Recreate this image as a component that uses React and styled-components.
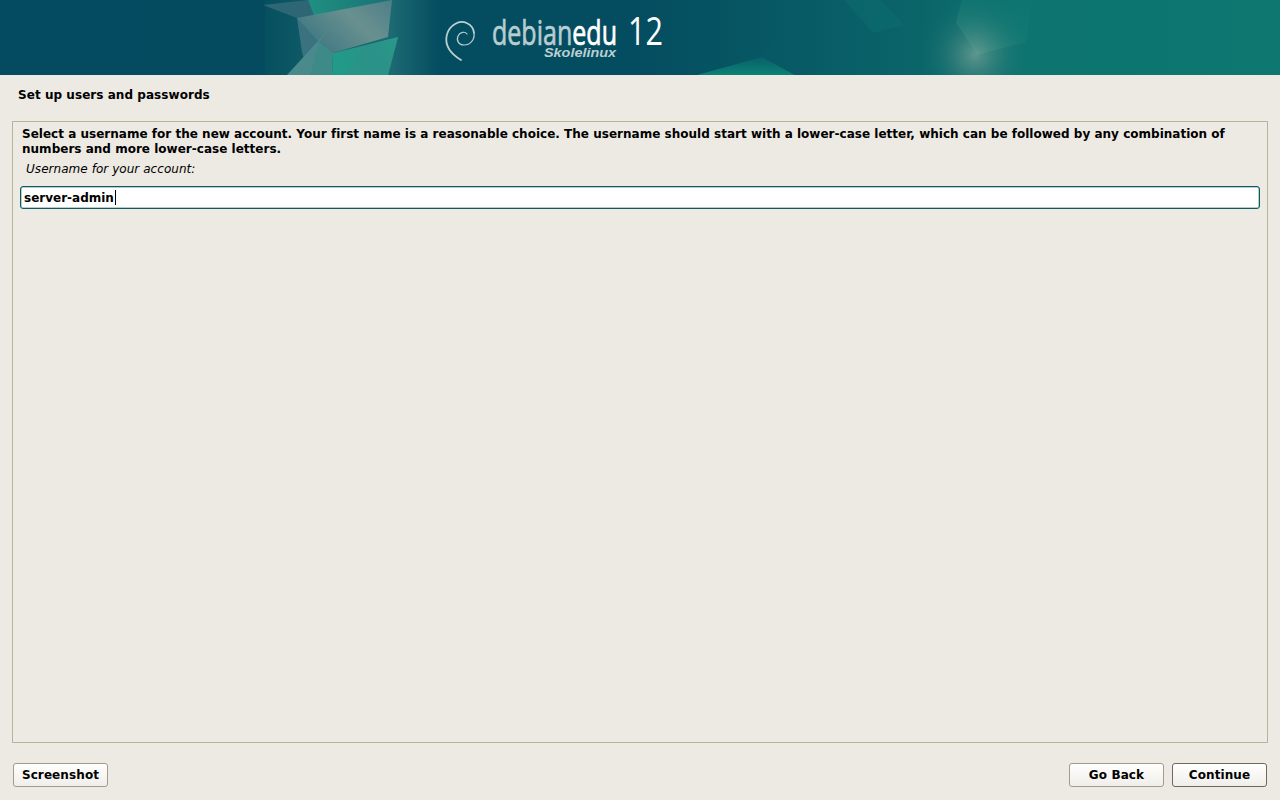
import styled, { createGlobalStyle } from 'styled-components';

const GlobalStyle = createGlobalStyle`
  html, body {
    margin: 0;
    height: 100%;
    background: #edeae3;
    overflow: hidden;
  }
  #root {
    height: 100%;
  }
  * {
    box-sizing: border-box;
  }
`;

function Banner() {
  return (
    <BannerSvg viewBox="0 0 1280 75" width="1280" height="75">
      <defs>
        <linearGradient id="base" x1="0" x2="1" y1="0" y2="0">
          <stop offset="0" stopColor="#044a60" />
          <stop offset="0.5" stopColor="#044d60" />
          <stop offset="0.72" stopColor="#0a6569" />
          <stop offset="0.8" stopColor="#0d7470" />
          <stop offset="1" stopColor="#0e7770" />
        </linearGradient>
        <linearGradient id="leftGlow" x1="0" x2="1" y1="0" y2="0">
          <stop offset="0" stopColor="#07505f" />
          <stop offset="0.4" stopColor="#12616c" />
          <stop offset="0.72" stopColor="#1c6a72" />
          <stop offset="1" stopColor="#044c60" />
        </linearGradient>
        <radialGradient id="glow" cx="975" cy="55" r="58" gradientUnits="userSpaceOnUse">
          <stop offset="0" stopColor="#7fa79b" stopOpacity="0.7" />
          <stop offset="0.5" stopColor="#5a9089" stopOpacity="0.25" />
          <stop offset="1" stopColor="#0d6d6c" stopOpacity="0" />
        </radialGradient>
        <linearGradient id="bottomTeal" x1="0" x2="0" y1="0" y2="1">
          <stop offset="0" stopColor="#0a5f68" />
          <stop offset="1" stopColor="#0b8275" />
        </linearGradient>
        <linearGradient id="topTeal" x1="0" x2="1" y1="0" y2="0">
          <stop offset="0" stopColor="#1f9080" />
          <stop offset="1" stopColor="#1a7076" />
        </linearGradient>
        <linearGradient id="greyShard" x1="1" x2="0" y1="0" y2="0.6">
          <stop offset="0" stopColor="#4d7f88" />
          <stop offset="0.45" stopColor="#69908f" />
          <stop offset="1" stopColor="#3f7883" />
        </linearGradient>
        <linearGradient id="tealShard" x1="0" x2="1" y1="0.5" y2="0">
          <stop offset="0" stopColor="#229a88" />
          <stop offset="0.55" stopColor="#2a9389" />
          <stop offset="1" stopColor="#1fa48d" />
        </linearGradient>
        <linearGradient id="rightShard" x1="0" x2="1" y1="1" y2="0">
          <stop offset="0" stopColor="#2f9183" stopOpacity="0.6" />
          <stop offset="1" stopColor="#107a72" stopOpacity="0.15" />
        </linearGradient>
      </defs>
      <rect width="1280" height="75" fill="url(#base)" />
      <rect x="265" width="175" height="75" fill="url(#leftGlow)" />

      <polygon points="263,5 308,0 315,17 297,18" fill="#2f6676" />
      <polygon points="308,0 392,0 340,17 320,41 315,18" fill="url(#topTeal)" />
      <polygon points="297,18 340,17 318,42 308,75 302,52" fill="#3a7280" />
      <polygon points="297,18 392,0 388,37 333,53 319,42" fill="url(#greyShard)" />
      <polygon points="287,75 340,17 319,42 333,53 330,75" fill="#4a8a8c" />
      <polygon points="319,42 333,53 332,75 310,75" fill="#3e8a88" />
      <polygon points="333,53 398,37 388,75 332,75" fill="url(#tealShard)" />
      <polygon points="365,46 398,37 388,75 345,75" fill="#2d8f88" opacity="0.5" />

      <polygon points="844,0 873,33 904,25 880,0" fill="#0e6f6e" opacity="0.45" />
      <polygon points="962,0 956,22 977,55 1026,42 1032,0" fill="url(#rightShard)" />
      <polygon points="697,75 762,57 795,75" fill="url(#bottomTeal)" />
      <polygon points="787,27 799,75 795,75 762,57" fill="#075a66" opacity="0.7" />
      <rect x="900" width="150" height="75" fill="url(#glow)" />

      <Swirl d="M474 33 C473 24 463 19 455 24 C446 29 444 41 449 49 C452 54 456 57 461 60" strokeWidth="1.8" />
      <Swirl d="M474 33 C475 40 470 45 464 45 C459 45 456 41 458 36 C460 32 465 31 467 34" strokeWidth="1.2" />

      <LogoText x="492" y="45" fontSize="34" textLength="125" lengthAdjust="spacingAndGlyphs">
        <tspan fill="#b7cdd0" stroke="#b7cdd0">debian</tspan>
        <tspan fill="#ffffff" stroke="#ffffff">edu</tspan>
      </LogoText>
      <VersionText x="628" y="45" fontSize="38" textLength="35" lengthAdjust="spacingAndGlyphs" fill="#ffffff">12</VersionText>
      <TagText x="544" y="57" fontSize="13" textLength="72" lengthAdjust="spacingAndGlyphs" fill="#b9cfd2">Skolelinux</TagText>
    </BannerSvg>
  );
}

export default function App() {
  return (
    <>
      <GlobalStyle />
      <Page>
        <Banner />
        <Title>Set up users and passwords</Title>
        <Panel>
          <Help>
            Select a username for the new account. Your first name is a reasonable choice. The username should start
            with a lower-case letter, which can be followed by any combination of numbers and more lower-case letters.
          </Help>
          <FieldLabel>Username for your account:</FieldLabel>
          <TextField>
            server-admin
            <Caret />
          </TextField>
        </Panel>
        <Footer>
          <Button>Screenshot</Button>
          <Actions>
            <Button>Go Back</Button>
            <Button $primary>Continue</Button>
          </Actions>
        </Footer>
      </Page>
    </>
  );
}

const Page = styled.div`
  width: 1280px;
  height: 800px;
  display: flex;
  flex-direction: column;
  background: #edeae3;
  color: #000;
  font-family: 'DejaVu Sans', sans-serif;
  font-size: 12px;
`;

const BannerSvg = styled.svg`
  display: block;
  flex: none;
`;

const Swirl = styled.path`
  fill: none;
  stroke: #b9cfd2;
  stroke-linecap: round;
`;

const LogoText = styled.text`
  font-family: 'Open Sans', 'Liberation Sans', sans-serif;
  font-weight: 400;
  stroke-width: 0.7px;
  white-space: nowrap;
`;

const VersionText = styled.text`
  font-family: 'Open Sans', 'Liberation Sans', sans-serif;
  font-weight: 400;
`;

const TagText = styled.text`
  font-family: 'Liberation Sans', sans-serif;
  font-style: italic;
  font-weight: 700;
`;

const Title = styled.div`
  height: 46px;
  padding: 13px 0 0 18px;
  font-weight: 700;
  line-height: 15px;
  letter-spacing: 0.05px;
  flex: none;
`;

const Panel = styled.main`
  flex: none;
  height: 622px;
  margin: 0 12px;
  padding: 5px 7px;
  border: 1px solid #b9b19e;
`;

const Help = styled.p`
  margin: 0 0 0 2px;
  font-weight: 700;
  line-height: 15px;
  letter-spacing: 0.015px;
`;

const FieldLabel = styled.div`
  margin: 5px 0 0 6px;
  font-style: italic;
  line-height: 15px;
  letter-spacing: 0.05px;
`;

const TextField = styled.div`
  display: flex;
  align-items: center;
  height: 23px;
  margin-top: 9px;
  padding: 0 3px;
  background: #fff;
  border: 1px solid #0f5a5c;
  border-radius: 3px;
  font-weight: 700;
  box-shadow: inset 0 0 0 0.5px rgba(15, 90, 92, 0.6);
`;

const Caret = styled.span`
  width: 1px;
  height: 15px;
  margin-left: 1px;
  background: #000;
`;

const Footer = styled.footer`
  display: flex;
  justify-content: space-between;
  padding: 20px 13px 0;
`;

const Actions = styled.div`
  display: flex;
  gap: 8px;
`;

const Button = styled.button`
  width: 95px;
  height: 24px;
  padding: 0;
  background: linear-gradient(#ffffff, #f0eee9);
  border: 1px solid ${props => (props.$primary ? '#6e675a' : '#a49c8b')};
  border-radius: 3px;
  color: #000;
  font-family: inherit;
  font-size: 12px;
  font-weight: 700;
  letter-spacing: 0.1px;
`;
